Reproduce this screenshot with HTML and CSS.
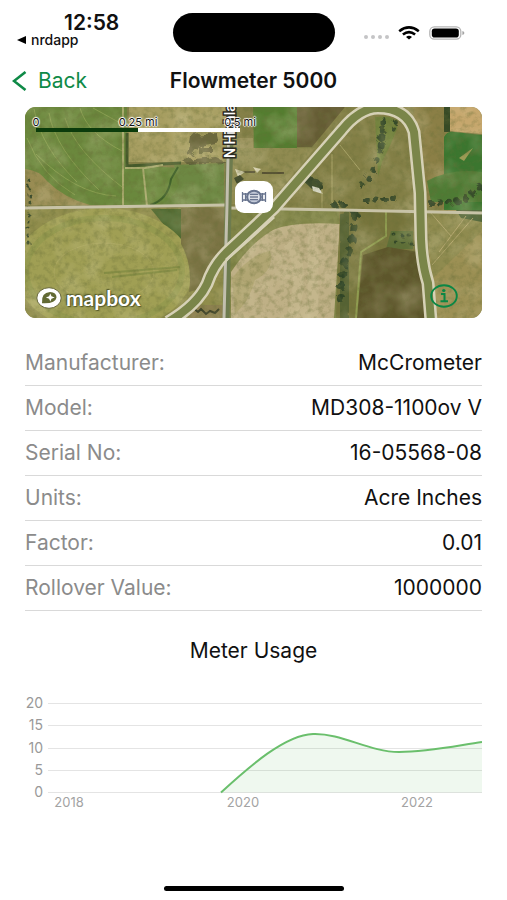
FILE: index.html
```html
<!doctype html>
<html lang="en">
<head>
	<title>Flowmeter 5000</title>
	<meta charset="utf-8">
	<meta name="viewport" content="width=device-width, initial-scale=1">
	<link rel="stylesheet" href="styles.css">
</head>
<body>
	<div class="status-bar">
		<div class="clock">
			<span class="time">12:58</span>
			<a class="back-app" href="#"><svg width="9" height="8" viewBox="0 0 9 8"><path d="M9 0v8L0 4z"/></svg>nrdapp</a>
		</div>
		<div class="island"></div>
		<div class="indicators">
			<svg class="signal" width="26" height="6" viewBox="0 0 26 6" fill="#c4c4c6"><circle cx="3" cy="3" r="2"/><circle cx="10" cy="3" r="2"/><circle cx="17" cy="3" r="2"/><circle cx="24" cy="3" r="2"/></svg>
			<svg width="22" height="14" viewBox="0 0 22 14" fill="none" stroke="#000" stroke-width="2.6"><path d="M1.2 5.2Q11 -2.4 20.8 5.2"/><path d="M4.9 8.6Q11 3.8 17.1 8.6"/><path d="M8 11Q11 8.6 14 11L11 13.6z" fill="#000" stroke="none"/></svg>
			<svg width="36" height="14" viewBox="0 0 36 14"><rect x="0.8" y="0.8" width="31" height="12.4" rx="4.5" fill="#fff" stroke="#b5b5b5" stroke-width="1.3"/><rect x="2.8" y="2.5" width="27" height="9" rx="2.8"/><path d="M33.4 5q2 .4 2 2t-2 2z" fill="#a5a5a5"/></svg>
		</div>
	</div>

	<header class="nav">
		<a class="back" href="#"><svg width="15" height="20" viewBox="0 0 15 20" fill="none" stroke="#0f8a47" stroke-width="2.6"><path d="M13.5 1L2 10l11.500 9"/></svg>Back</a>
		<h1>Flowmeter 5000</h1>
	</header>

	<main>
		<div class="map">
			<svg class="aerial" viewBox="25 107 457 211" preserveAspectRatio="xMidYMid slice">
				<defs>
					<filter id="grain" x="0" y="0" width="100%" height="100%">
						<feTurbulence type="fractalNoise" baseFrequency="0.16" numOctaves="4" seed="8"/>
						<feColorMatrix values="0 0 0 0 0.14  0 0 0 0 0.16  0 0 0 0 0.04  1.9 0 0 0 -0.82"/>
					</filter>
					<filter id="mottle" x="0" y="0" width="100%" height="100%">
						<feTurbulence type="fractalNoise" baseFrequency="0.035" numOctaves="3" seed="21"/>
						<feColorMatrix values="0 0 0 0 0.78  0 0 0 0 0.72  0 0 0 0 0.46  0 1.8 0 0 -0.75"/>
					</filter>
					<filter id="ragged" x="-10%" y="-10%" width="120%" height="120%">
						<feTurbulence type="fractalNoise" baseFrequency="0.12" numOctaves="2" seed="4"/>
						<feDisplacementMap in="SourceGraphic" scale="9"/>
					</filter>
				</defs>
				<rect x="25" y="107" width="457" height="211" fill="#858048"/>

				<!-- north west fields -->
				<path d="M25 107h102v98H25z" fill="#6b883d"/>
				<path d="M25 169q14 1 22 12 17 17 43 24H25z" fill="#998c53"/>
				<path d="M129 107h97v55h-98z" fill="#a79e61"/>
				<path d="M125 165l56 3v38h-56z" fill="#6a883d"/>
				<path d="M174 165l50-2v43h-65q18-10 20-24z" fill="#6d8843"/>
				<path d="M150 205q18-5 21-26l7-12" fill="none" stroke="#3f612a" stroke-width="2"/>
				<g fill="none" stroke="#9dae5d" stroke-opacity=".6">
					<path d="M34 109q7 38 43 73M49 113q6 36 50 77M65 118q10 33 57 69M80 108q7 25 42 43M93 108l29 16M27 138q14 37 48 57M36 154q40 40 80 42"/>
				</g>
				<path d="M127 133v33l54-3" fill="none" stroke="#455a2b" stroke-width="3"/>
				<path d="M123 107v98M125 168h20l18-3M143 168l4 38" fill="none" stroke="#a9ab6e" stroke-width="2"/>
				<g filter="url(#ragged)" fill="#454529" fill-opacity=".6">
					<path d="M189 135l29-2 2 9-20 4-7 10-7-2zM182 160l34-3 10 5-39 2zM199 147h13v7h-13z"/>
				</g>

				<!-- north middle -->
				<path d="M232 138h21v29h-21z" fill="#978f58"/>
				<path d="M253 107h44v41h-43z" fill="#547d30"/>
				<path d="M297 107h48l-33 40h-15z" fill="#655c34"/>
				<path d="M231 148h84l-47 56h-37z" fill="#908b51"/>
				<path d="M240 172h15M262 173h22" stroke="#575134" stroke-width="2"/>
				<path d="M235 169l10 3-7 5zM253 167l8 2-4 4z" fill="#ddd7b8"/>
				<path d="M234 178l6-3 4 4-7 5z" fill="#3f482b"/>
				<path d="M345 107h57l14 103H270z" fill="#837f46"/>
				<g filter="url(#ragged)">
					<path d="M303 181l7-5 12 6 3 8-14-2z" fill="#344427"/>
				</g>
				<path d="M312 186l7 2 4 6-10-3z" fill="#d8d9c8"/>
				<path d="M322 189v19M340 145l20 25M332 154v53" stroke="#aaa569" fill="none"/>
				<path d="M375 117q25-3 22 12-7 18-15 33-2 9-4 14" fill="#70813b"/>

				<!-- north east -->
				<path d="M413 107h37v101h-30z" fill="#8b7f46"/>
				<path d="M450 107h32v27l-32-3z" fill="#c6a76d"/>
				<path d="M444 107h6v25h-6z" fill="#364a25"/>
				<path d="M444 137q3-6 10-5l28 3v75h-38z" fill="#3b762f"/>
				<path d="M427 181q24-13 55-9v30h-51z" fill="#4e7b34"/>
				<path d="M459 158l14-10-9 13z" fill="#9c9b55"/>

				<!-- south west -->
				<path d="M25 208h201v110H25z" fill="#908d4c"/>
				<path d="M151 209h37l1 47z" fill="#4f6a31"/>
				<ellipse cx="104" cy="270" rx="89" ry="62" fill="#a09f54"/>
				<ellipse cx="104" cy="271" rx="78" ry="53" fill="none" stroke="#88944a" stroke-width="6" stroke-opacity=".45"/>
				<ellipse cx="104" cy="272" rx="50" ry="29" fill="none" stroke="#b5b06a" stroke-opacity=".5"/>
				<path d="M104 273l76-6M112 277l65-7" stroke="#6e8038" stroke-width="2" stroke-opacity=".5"/>
				<path d="M181 208h43v50l-18 29-17 5q4-27-8-48z" fill="#7b7444"/>
				<path d="M193 305h32v13h-37z" fill="#8d8150"/>
				<path d="M193 308l5 4 3-3 5 5 4-3 5 2 4-4" fill="none" stroke="#3f4429" stroke-width="2"/>

				<!-- south middle -->
				<path d="M229 210h110v108H229z" fill="#7f8446"/>
				<path d="M231 318v-46q20-30 42-42 20-9 67-6l-6 94z" fill="#bfb086"/>
				<path d="M232 278q19-24 38-27 5 19-15 29-6 22-20 34z" fill="#a8a068" fill-opacity=".6"/>
				<path d="M288 243q19 24 4 73M313 229v89" fill="none" stroke="#d0c39b" stroke-width="11" stroke-opacity=".3"/>
				<path d="M340 210h78l3 40 9 68h-94z" fill="#77753c"/>
				<path d="M391 231h22v18h-27z" fill="#5d6f38"/>
				<path d="M363 255l25-8 30 5 10 66h-71z" fill="#5d562b"/>
				<path d="M386 211v25l-25 16-5 66" fill="none" stroke="#8f9c50" stroke-width="2"/>

				<!-- south east -->
				<path d="M428 210h54v108h-51z" fill="#9c9054"/>
				<path d="M427 211h55v20l-50 48z" fill="#8f8b4f"/>
				<path d="M456 210h26v12l-21-4z" fill="#415a2e"/>
				<path d="M430 212l21 24M473 218l-41 47M466 216l-27 36" stroke="#b7aa72" fill="none"/>

				<!-- tree lines -->
				<path d="M345 212q6 30 0 52-2 30-4 54" fill="none" stroke="#475a2f" stroke-width="17" stroke-opacity=".7" filter="url(#ragged)"/>
				<g filter="url(#ragged)" fill="none" stroke="#2c4023" stroke-linecap="round" stroke-opacity=".85">
					<path d="M383 121l-2 27" stroke-width="7" stroke-dasharray="1 7"/>
					<path d="M380 150l-5 16-8 14-8 12" stroke-width="5" stroke-dasharray="1 9"/>
					<path d="M396 122l-3 9" stroke-width="4" stroke-dasharray="1 6"/>
					<path d="M334 205h16M366 200l34-2M430 203l32-2 20-14" stroke-width="6" stroke-dasharray="1 8"/>
					<path d="M355 215l-4 30-8 20-4 43" stroke-width="8" stroke-dasharray="1 11"/>
					<path d="M394 235h18M396 243h16" stroke-width="3" stroke-dasharray="1 6"/>
					<path d="M29 180v70" stroke-width="3" stroke-dasharray="1 6"/>
				</g>

				<rect x="25" y="107" width="457" height="211" filter="url(#mottle)" opacity=".35"/>
				<rect x="25" y="107" width="457" height="211" filter="url(#grain)" opacity=".5"/>

				<!-- roads and canal -->
				<path d="M25 208l201-3M230 208l110 2 142 3" fill="none" stroke="#c8c3a7" stroke-width="3"/>
				<path d="M231 107l-3 98-2 113" fill="none" stroke="#6d7b4e" stroke-width="7"/>
				<path d="M229 107l-2 98-3 113" fill="none" stroke="#c2bfae" stroke-width="3"/>
				<g fill="none" stroke-linejoin="round">
					<path d="M168 322q29-17 39-38 6-18 19-31l48-45 68-78q18-22 36-22 29 0 36 24l6 61 1 46q1 25 7 44l3 38" stroke="#d6d1b6" stroke-width="13"/>
					<path d="M168 322q29-17 39-38 6-18 19-31l48-45 68-78q18-22 36-22 29 0 36 24l6 61 1 46q1 25 7 44l3 38" stroke="#7a8549" stroke-width="8"/>
				</g>
				<path d="M226 260l48-43" stroke="#d6d1b6" stroke-width="3"/>

				<text class="road-name" transform="translate(235 158) rotate(-90)">N Highla</text>
			</svg>

			<div class="scale">
				<div class="scale-labels"><span>0</span><span>0.25 mi</span><span>0.5 mi</span></div>
				<div class="scale-bar"></div>
			</div>
			<button class="marker" aria-label="Flowmeter 5000">
				<svg width="26" height="16" viewBox="0 0 26 16" fill="none" stroke="#68748e" stroke-width="1.3"><path d="M1.500 3v10M4.500 4v8M21.500 4v8M24.500 3v10M1.500 5H7M1.500 11H7M19 5h5.500M19 11h5.500"/><ellipse cx="13" cy="8" rx="7" ry="6.300" fill="#c3cad8" stroke-width="2"/><path d="M8.500 6h9v4.500h-9z" fill="#fff" stroke="none"/><path d="M9 5.500h8M9 8h8M9 10.500h8"/></svg>
			</button>
			<a class="mapbox" href="#">
				<svg width="26" height="22" viewBox="0 0 26 22"><ellipse cx="13" cy="11" rx="12.200" ry="10.300" fill="#fff" stroke="#68683a"/><path d="M6 16.200Q5 5.500 14 5q6.500.2 6.500 5.500-1 6.500-14.500 5.700z" fill="#626a34"/><path d="M14.300 6.500l1.200 2.800 3.200 1.200-3.200 1.200-1.200 2.800-1.200-2.800-3.200-1.200 3.200-1.200z" fill="#fff"/></svg>
				mapbox
			</a>
			<button class="info" aria-label="Map information">
				<svg width="28" height="24" viewBox="0 0 28 24" fill="none" stroke="#0b8745"><ellipse cx="14" cy="12" rx="12.800" ry="10.800" stroke-width="1.900"/><path d="M11 10h3.500v7M10.500 17.200h7.500" stroke-width="2"/><ellipse cx="13.800" cy="6.500" rx="1.700" ry="1.500" fill="#0b8745" stroke="none"/></svg>
			</button>
		</div>

		<dl class="details">
			<div><dt>Manufacturer:</dt><dd>McCrometer</dd></div>
			<div><dt>Model:</dt><dd>MD308-1100ov V</dd></div>
			<div><dt>Serial No:</dt><dd>16-05568-08</dd></div>
			<div><dt>Units:</dt><dd>Acre Inches</dd></div>
			<div><dt>Factor:</dt><dd>0.01</dd></div>
			<div><dt>Rollover Value:</dt><dd>1000000</dd></div>
		</dl>

		<h2>Meter Usage</h2>
		<svg class="chart" viewBox="0 0 457 116" role="img" aria-label="Meter usage by year">
			<path class="grid" d="M23 8.500h434M23 30.500h434M23 53.500h434M23 75.500h434M23 97.500h434"/>
			<path class="area" d="M196 97.500C225 71 260 40 288 39c29-1 56 18 86 18 28 0 56-6 83-10v50.500z"/>
			<path class="line" d="M196 97.500C225 71 260 40 288 39c29-1 56 18 86 18 28 0 56-6 83-10"/>
			<g class="y-axis">
				<text x="18" y="13">20</text>
				<text x="18" y="35">15</text>
				<text x="18" y="58">10</text>
				<text x="18" y="80">5</text>
				<text x="18" y="102">0</text>
			</g>
			<g class="x-axis">
				<text x="44" y="112">2018</text>
				<text x="218" y="112">2020</text>
				<text x="392" y="112">2022</text>
			</g>
		</svg>
	</main>

	<div class="home-indicator"></div>
</body>
</html>
```
FILE: styles.css
```css
* {
	box-sizing: border-box;
}
body {
	display: flex;
	flex-direction: column;
	min-height: 100vh;
	margin: 0;
	background: #fff;
	color: #111;
	font-family: Inter, "Liberation Sans", sans-serif;
	font-size: 21px;
	line-height: 24px;
}
a {
	color: inherit;
	text-decoration: none;
}
button {
	padding: 0;
	border: 0;
	background: none;
}
svg {
	display: block;
}

/* status bar */
.status-bar {
	display: grid;
	grid-template-columns: 1fr 162px 1fr;
	padding-top: 13px;
}
.clock {
	display: flex;
	flex-direction: column;
	padding-left: 17px;
}
.time {
	padding-left: 47px;
	font-size: 21px;
	font-weight: 600;
	line-height: 20px;
}
.back-app {
	display: flex;
	align-items: center;
	gap: 5px;
	font-size: 14px;
	font-weight: 500;
	line-height: 14px;
}
.island {
	height: 39px;
	border-radius: 20px;
	background: #000;
}
.indicators {
	display: flex;
	align-items: center;
	justify-content: flex-end;
	gap: 9px;
	padding-right: 42px;
}
.signal {
	margin-top: 8px;
}

/* navigation */
.nav {
	display: grid;
	grid-template-columns: 1fr auto 1fr;
	align-items: center;
	height: 55px;
	padding: 2px 12px 0;
}
.back {
	display: flex;
	align-items: center;
	gap: 11px;
	color: #0f8a47;
}
h1 {
	margin: 0;
	font-size: 21px;
	font-weight: 600;
}

main {
	padding: 0 25px;
}

/* map */
.map {
	position: relative;
	border-radius: 11px;
	overflow: hidden;
}
.aerial {
	width: 100%;
}
.road-name {
	fill: #fff;
	stroke: #2b2b22;
	stroke-width: 3px;
	paint-order: stroke;
	font-family: Roboto, sans-serif;
	font-size: 14px;
	font-weight: 500;
}
.scale {
	position: absolute;
	top: 9px;
	left: 11px;
	width: 204px;
}
.scale-labels {
	display: grid;
	grid-template-columns: 0 1fr 0;
	justify-items: center;
	color: #111;
	font-size: 11px;
	line-height: 12px;
	white-space: nowrap;
	text-shadow: 0 0 1px #fff, 1px 0 1px #fff, -1px 0 1px #fff, 0 1px 1px #fff, 0 -1px 1px #fff;
}
.scale-bar {
	height: 4px;
	background: linear-gradient(to right, #0b3b0b 50%, #fff 50%);
}
.marker {
	position: absolute;
	top: 74px;
	left: calc(50% - 19px);
	display: flex;
	align-items: center;
	justify-content: center;
	width: 38px;
	height: 32px;
	border-radius: 9px;
	background: #fff;
}
.mapbox {
	position: absolute;
	bottom: 9px;
	left: 11px;
	display: flex;
	align-items: center;
	gap: 4px;
	color: #fff;
	font-family: Lato, sans-serif;
	font-size: 21px;
	font-weight: 700;
	line-height: 22px;
	text-shadow: 0 0 2px #555a2c, 1px 1px 1px #555a2c, -1px -1px 1px #555a2c;
}
.info {
	position: absolute;
	right: 24px;
	bottom: 10px;
}

/* details */
.details {
	margin: 23px 0 0;
}
.details div {
	display: flex;
	justify-content: space-between;
	height: 45px;
	padding-top: 10px;
	border-bottom: 1px solid #d9d9d9;
}
.details dt {
	color: #8b8b8b;
}
.details dd {
	margin: 0;
}

/* chart */
h2 {
	margin: 28px 0 32px;
	font-size: 21px;
	font-weight: 400;
	text-align: center;
}
.chart {
	width: 100%;
}
.grid {
	stroke: #e4e4e4;
}
.area {
	fill: #4caf50;
	fill-opacity: .09;
}
.line {
	fill: none;
	stroke: #6abf6c;
	stroke-width: 2px;
}
.y-axis {
	fill: #999;
	font-size: 14px;
	text-anchor: end;
}
.x-axis {
	fill: #a3a3a3;
	font-size: 13px;
	text-anchor: middle;
}

.home-indicator {
	width: 180px;
	height: 5px;
	margin: auto auto 9px;
	border-radius: 3px;
	background: #000;
}
```
